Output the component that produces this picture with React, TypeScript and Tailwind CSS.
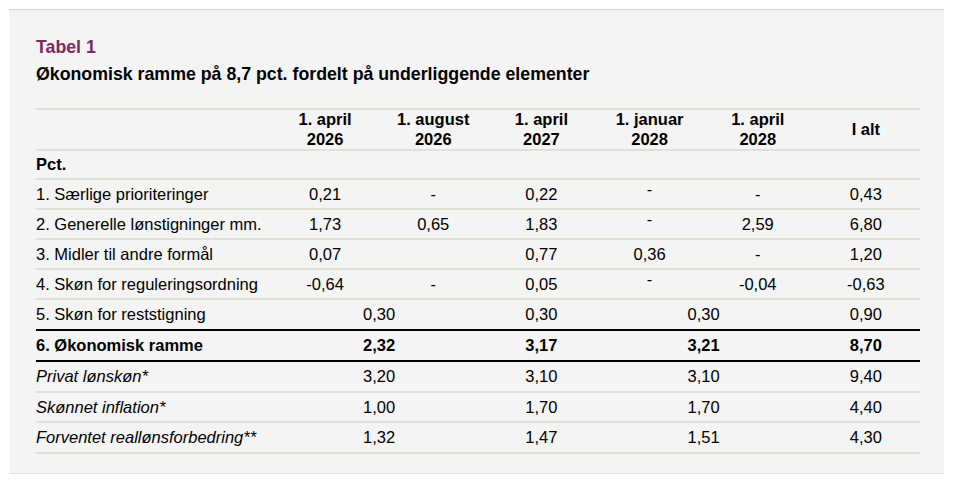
import React from 'react';

type Cell = { v: string; span?: boolean; raised?: boolean };
type Row = { label: string; cells: Cell[]; h: string; kind?: 'bold' | 'italic'; black?: boolean };

const c = (v: string, raised = false): Cell => ({ v, raised });
const s = (v: string): Cell => ({ v, span: true });

const rows: Row[] = [
  {
    label: '1. Særlige prioriteringer',
    h: 'h-[30px]',
    cells: [c('0,21'), c('-'), c('0,22'), c('-', true), c('-'), c('0,43')],
  },
  {
    label: '2. Generelle lønstigninger mm.',
    h: 'h-[30px]',
    cells: [c('1,73'), c('0,65'), c('1,83'), c('-', true), c('2,59'), c('6,80')],
  },
  {
    label: '3. Midler til andre formål',
    h: 'h-[30px]',
    cells: [c('0,07'), c(''), c('0,77'), c('0,36'), c('-'), c('1,20')],
  },
  {
    label: '4. Skøn for reguleringsordning',
    h: 'h-[30px]',
    cells: [c('-0,64'), c('-'), c('0,05'), c('-', true), c('-0,04'), c('-0,63')],
  },
  {
    label: '5. Skøn for reststigning',
    h: 'h-[31px]',
    black: true,
    cells: [s('0,30'), c('0,30'), s('0,30'), c('0,90')],
  },
  {
    label: '6. Økonomisk ramme',
    h: 'h-[31px]',
    kind: 'bold',
    black: true,
    cells: [s('2,32'), c('3,17'), s('3,21'), c('8,70')],
  },
  {
    label: 'Privat lønskøn*',
    h: 'h-[31px]',
    kind: 'italic',
    cells: [s('3,20'), c('3,10'), s('3,10'), c('9,40')],
  },
  {
    label: 'Skønnet inflation*',
    h: 'h-[30px]',
    kind: 'italic',
    cells: [s('1,00'), c('1,70'), s('1,70'), c('4,40')],
  },
  {
    label: 'Forventet reallønsforbedring**',
    h: 'h-[31px]',
    kind: 'italic',
    cells: [s('1,32'), c('1,47'), s('1,51'), c('4,30')],
  },
];

const headers = [
  ['1. april', '2026'],
  ['1. august', '2026'],
  ['1. april', '2027'],
  ['1. januar', '2028'],
  ['1. april', '2028'],
  ['I alt'],
];

const grid = 'grid grid-cols-[235px_repeat(6,minmax(0,1fr))]';

export default function App() {
  return (
    <div
      className="min-h-screen bg-white pt-[9px] pl-[9px] text-black"
      style={{ fontFamily: '"Liberation Sans", Arial, sans-serif' }}
    >
      <div className="w-[935px] h-[465px] bg-[#f4f4f4] border-t border-b border-t-[#d3d3d3] border-b-[#e3e3e3] pl-[27px] pt-[27px]">
        {/* Title */}
        <div className="text-[17.75px] leading-[20px] font-bold text-[#7b2b63]">Tabel 1</div>
        <div className="mt-[7px] text-[17.75px] leading-[20px] font-bold">
          Økonomisk ramme på 8,7 pct. fordelt på underliggende elementer
        </div>

        {/* Table */}
        <div className="mt-[24px] w-[884px] text-[16.5px]">
          <div className={`${grid} h-[43px] border-y-2 border-[#e4e0d7] font-bold leading-[19.5px]`}>
            <div />
            {headers.map((h, i) => (
              <div key={i} className="flex flex-col items-center justify-center text-center">
                {h.map((line) => (
                  <span key={line}>{line}</span>
                ))}
              </div>
            ))}
          </div>

          <div className={`${grid} h-[29px] border-b-2 border-[#e4e0d7] font-bold items-center`}>
            <div>Pct.</div>
          </div>

          {rows.map((r) => (
            <div
              key={r.label}
              className={`${grid} ${r.h} border-b-2 items-center ${
                r.black ? 'border-black' : 'border-[#e4e0d7]'
              } ${r.kind === 'bold' ? 'font-bold' : ''}`}
            >
              <div className={r.kind === 'italic' ? 'italic' : ''}>{r.label}</div>
              {r.cells.map((cell, i) => (
                <div key={i} className={`text-center ${cell.span ? 'col-span-2' : ''}`}>
                  {cell.raised ? (
                    <span className="inline-block -translate-y-[5px]">{cell.v}</span>
                  ) : (
                    cell.v
                  )}
                </div>
              ))}
            </div>
          ))}
        </div>
      </div>
    </div>
  );
}
